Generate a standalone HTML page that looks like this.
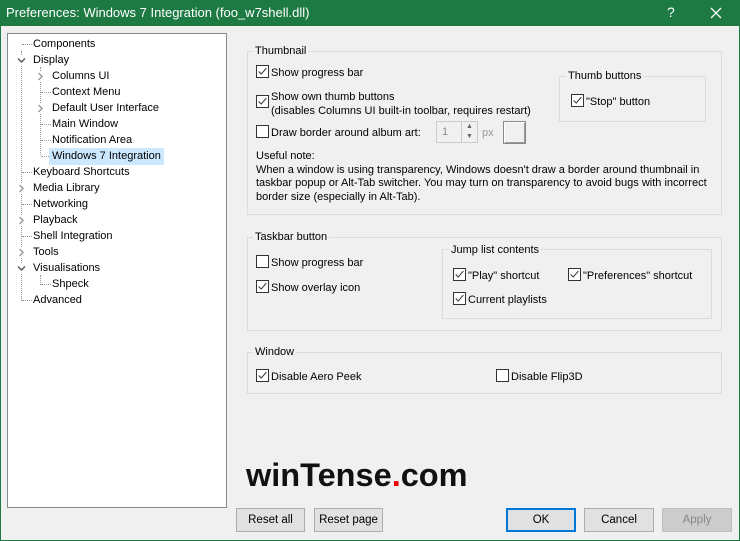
<!DOCTYPE html>
<html><head><style>
*{margin:0;padding:0;box-sizing:border-box}
body{width:740px;height:541px;background:#f0f0f0;font-family:"Liberation Sans",sans-serif;font-size:11px;color:#000;position:relative;overflow:hidden}
.a{position:absolute;white-space:nowrap}
#tb{left:0;top:0;width:740px;height:26px;background:#1d7a43;color:#fff;font-size:13px}
#frame{left:0;top:26px;width:740px;height:515px;border:1px solid #1d7a43;border-top:none}
#tree{left:7px;top:33px;width:220px;height:475px;background:#fff;border:1px solid #828790}
.g{position:absolute;border:1px solid #dcdcdc}
.gl{position:absolute;background:#f0f0f0;padding:0 2px;line-height:14px}
.cb{position:absolute;width:13px;height:13px;border:1px solid #333;background:#fff}
.btn{position:absolute;height:24px;border:1px solid #adadad;background:#e1e1e1;text-align:center;line-height:22px;font-size:11.5px}
.t{position:absolute;line-height:14px;white-space:nowrap}
.dl{position:absolute;border-top:1px dotted #999;width:10px}
.dv{position:absolute;border-left:1px dotted #999}
.arr{position:absolute}
</style></head><body>
<div id="tb" class="a"><span class="a" style="left:6px;top:5px">Preferences: Windows 7 Integration (foo_w7shell.dll)</span><span class="a" style="left:667px;top:4px;font-size:14px">?</span><svg class="a" style="left:710px;top:7px" width="12" height="12"><path d="M1 1L11 11M11 1L1 11" stroke="#fff" stroke-width="1.3"/></svg></div>
<div id="frame" class="a"></div>
<svg width="0" height="0" style="position:absolute"><defs>
<symbol id="ck" viewBox="0 0 13 13"><path d="M2 6.5L5 9.5L11 2.5" fill="none" stroke="#333" stroke-width="1.2"/></symbol>
<symbol id="rt" viewBox="0 0 9 9"><path d="M2.5 1L6 4.5L2.5 8" fill="none" stroke="#999" stroke-width="1.4"/></symbol>
<symbol id="dn" viewBox="0 0 9 9"><path d="M1 2.5L4.5 6L8 2.5" fill="none" stroke="#555" stroke-width="1.4"/></symbol>
</defs></svg>
<div id="tree" class="a">
<div class="dv" style="left:13px;top:17px;height:250px;background:#fff"></div>
<div class="dv" style="left:32px;top:33px;height:88px"></div>
<div class="dv" style="left:32px;top:241px;height:10px"></div>
<div class="dl" style="left:14px;top:10px"></div><div class="t" style="left:25px;top:3px">Components</div>
<svg class="arr" style="left:9px;top:22px;background:#fff" width="9" height="9"><use href="#dn"/></svg><div class="t" style="left:25px;top:19px">Display</div>
<svg class="arr" style="left:28px;top:38px;background:#fff" width="9" height="9"><use href="#rt"/></svg><div class="t" style="left:44px;top:35px">Columns UI</div>
<div class="dl" style="left:33px;top:58px"></div><div class="t" style="left:44px;top:51px">Context Menu</div>
<svg class="arr" style="left:28px;top:70px;background:#fff" width="9" height="9"><use href="#rt"/></svg><div class="t" style="left:44px;top:67px">Default User Interface</div>
<div class="dl" style="left:33px;top:90px"></div><div class="t" style="left:44px;top:83px">Main Window</div>
<div class="dl" style="left:33px;top:106px"></div><div class="t" style="left:44px;top:99px">Notification Area</div>
<div class="dl" style="left:33px;top:122px"></div><div class="t" style="left:41px;top:114px;background:#cce8ff;padding:1px 3px;line-height:15px">Windows 7 Integration</div>
<div class="dl" style="left:14px;top:138px"></div><div class="t" style="left:25px;top:131px">Keyboard Shortcuts</div>
<svg class="arr" style="left:9px;top:150px;background:#fff" width="9" height="9"><use href="#rt"/></svg><div class="t" style="left:25px;top:147px">Media Library</div>
<div class="dl" style="left:14px;top:170px"></div><div class="t" style="left:25px;top:163px">Networking</div>
<svg class="arr" style="left:9px;top:182px;background:#fff" width="9" height="9"><use href="#rt"/></svg><div class="t" style="left:25px;top:179px">Playback</div>
<div class="dl" style="left:14px;top:202px"></div><div class="t" style="left:25px;top:195px">Shell Integration</div>
<svg class="arr" style="left:9px;top:214px;background:#fff" width="9" height="9"><use href="#rt"/></svg><div class="t" style="left:25px;top:211px">Tools</div>
<svg class="arr" style="left:9px;top:230px;background:#fff" width="9" height="9"><use href="#dn"/></svg><div class="t" style="left:25px;top:227px">Visualisations</div>
<div class="dl" style="left:33px;top:250px"></div><div class="t" style="left:44px;top:243px">Shpeck</div>
<div class="dl" style="left:14px;top:266px"></div><div class="t" style="left:25px;top:259px">Advanced</div>
</div>

<div class="g" style="left:247px;top:51px;width:475px;height:164px"></div>
<div class="gl" style="left:253px;top:44px">Thumbnail</div>
<div class="cb" style="left:256px;top:65px"><svg width="11" height="11"><use href="#ck"/></svg></div><div class="t" style="left:271px;top:66px">Show progress bar</div>
<div class="cb" style="left:256px;top:95px"><svg width="11" height="11"><use href="#ck"/></svg></div><div class="t" style="left:271px;top:90px">Show own thumb buttons<br>(disables Columns UI built-in toolbar, requires restart)</div>
<div class="cb" style="left:256px;top:125px"></div><div class="t" style="left:271px;top:126px">Draw border around album art:</div>
<div class="a" style="left:436px;top:121px;width:42px;height:22px;border:1px solid #ccc;background:#f0f0f0;color:#888;padding:4px 5px">1</div>
<div class="a" style="left:461px;top:122px;width:16px;height:20px;border-left:1px solid #ccc;font-size:7px;color:#666;text-align:center;line-height:10px">▲<br>▼</div>
<div class="t" style="left:482px;top:126px;color:#999">px</div>
<div class="a" style="left:503px;top:121px;width:23px;height:23px;border:1px solid #888;box-shadow:inset 1px 1px #fff,inset -1px -1px #999"></div>
<div class="t" style="left:256px;top:150px;line-height:13.5px">Useful note:<br>When a window is using transparency, Windows doesn't draw a border around thumbnail in<br>taskbar popup or Alt-Tab switcher. You may turn on transparency to avoid bugs with incorrect<br>border size (especially in Alt-Tab).</div>
<div class="g" style="left:559px;top:76px;width:147px;height:46px"></div>
<div class="gl" style="left:566px;top:69px">Thumb buttons</div>
<div class="cb" style="left:571px;top:94px"><svg width="11" height="11"><use href="#ck"/></svg></div><div class="t" style="left:586px;top:95px">"Stop" button</div>

<div class="g" style="left:247px;top:237px;width:475px;height:94px"></div>
<div class="gl" style="left:253px;top:230px">Taskbar button</div>
<div class="cb" style="left:256px;top:255px"></div><div class="t" style="left:271px;top:256px">Show progress bar</div>
<div class="cb" style="left:256px;top:280px"><svg width="11" height="11"><use href="#ck"/></svg></div><div class="t" style="left:271px;top:281px">Show overlay icon</div>
<div class="g" style="left:442px;top:249px;width:270px;height:70px"></div>
<div class="gl" style="left:449px;top:243px">Jump list contents</div>
<div class="cb" style="left:453px;top:268px"><svg width="11" height="11"><use href="#ck"/></svg></div><div class="t" style="left:468px;top:269px">"Play" shortcut</div>
<div class="cb" style="left:568px;top:268px"><svg width="11" height="11"><use href="#ck"/></svg></div><div class="t" style="left:583px;top:269px">"Preferences" shortcut</div>
<div class="cb" style="left:453px;top:292px"><svg width="11" height="11"><use href="#ck"/></svg></div><div class="t" style="left:468px;top:293px">Current playlists</div>

<div class="g" style="left:247px;top:352px;width:475px;height:42px"></div>
<div class="gl" style="left:253px;top:345px">Window</div>
<div class="cb" style="left:256px;top:369px"><svg width="11" height="11"><use href="#ck"/></svg></div><div class="t" style="left:271px;top:370px">Disable Aero Peek</div>
<div class="cb" style="left:496px;top:369px"></div><div class="t" style="left:511px;top:370px">Disable Flip3D</div>

<div class="a" style="left:246px;top:457px;font-size:32.5px;font-weight:bold;color:#111">winTense<span style="color:#e00">.</span>com</div>

<div class="btn" style="left:236px;top:508px;width:69px">Reset all</div>
<div class="btn" style="left:314px;top:508px;width:69px">Reset page</div>
<div class="btn" style="left:506px;top:508px;width:70px;border:2px solid #0078d7;line-height:20px">OK</div>
<div class="btn" style="left:584px;top:508px;width:70px">Cancel</div>
<div class="btn" style="left:662px;top:508px;width:70px;color:#888;border-color:#bfbfbf;background:#ccc">Apply</div>
</body></html>
